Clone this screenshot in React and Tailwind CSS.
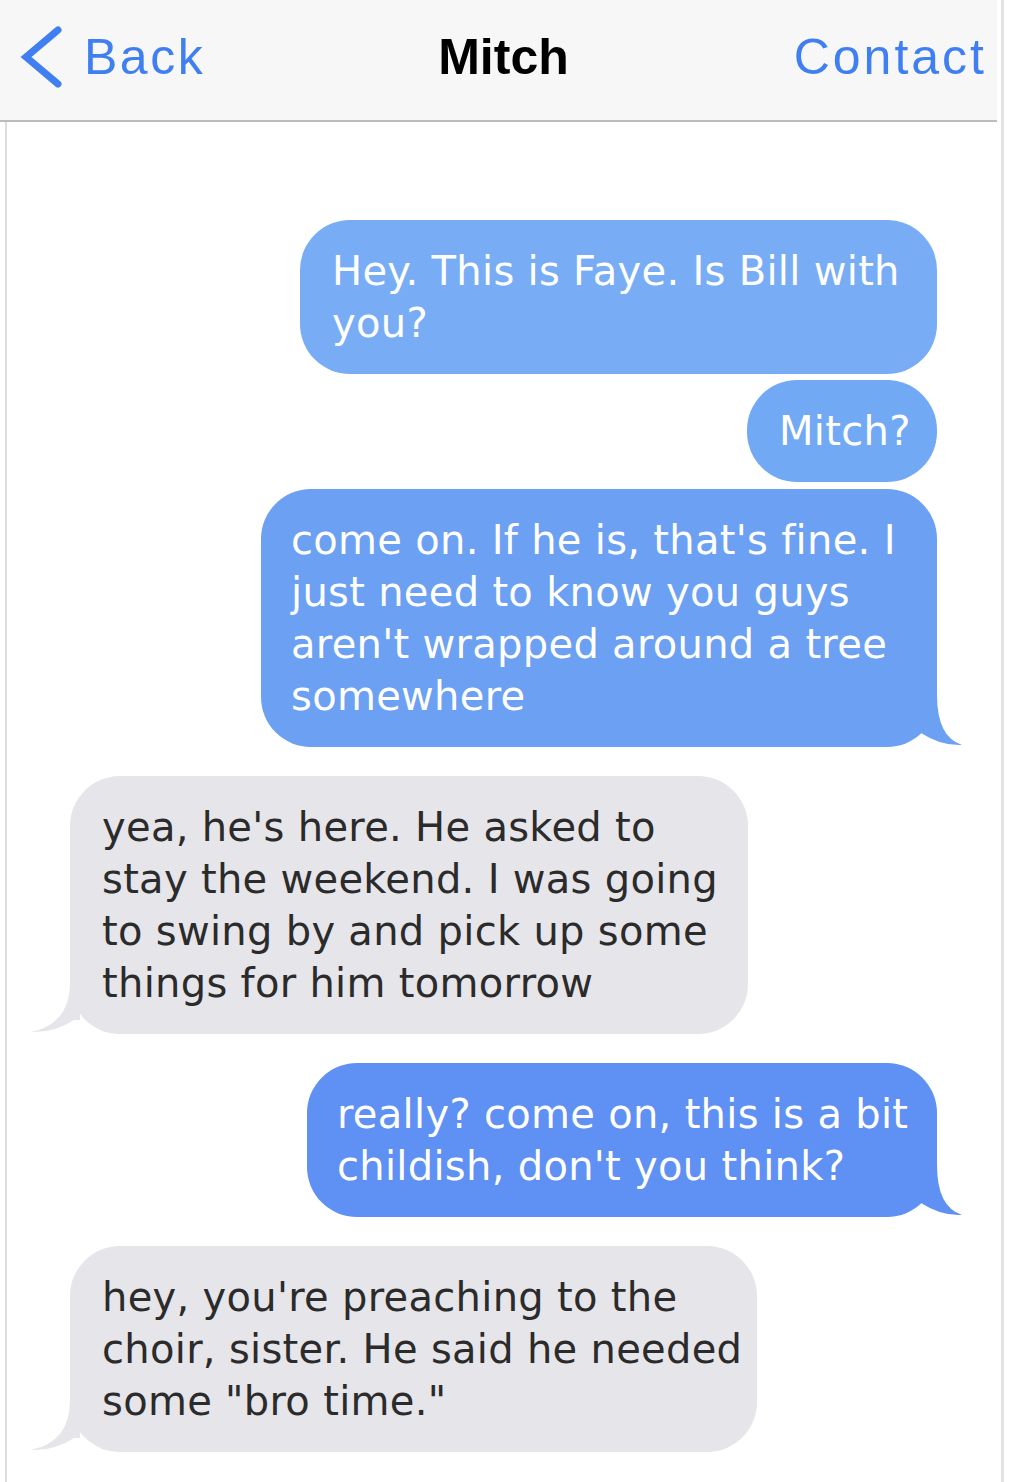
export default function App() {
  const font = { fontFamily: '"DejaVu Sans", Verdana, sans-serif' }

  const SentTail = ({ color }) => (
    <svg width="50" height="52" viewBox="0 0 50 52" className="absolute right-[-26px] bottom-0">
      <path d="M0 0 L24 0 Q24 42 49 50 Q28 51 8 38 L0 38 Z" fill={color} />
    </svg>
  )

  const ReceivedTail = () => (
    <svg width="50" height="52" viewBox="0 0 50 52" className="absolute left-[-40px] bottom-0">
      <path d="M50 0 L40 0 Q40 42 1 50 Q24 51 44 38 L50 38 Z" fill="#e5e5ea" />
    </svg>
  )

  return (
    <div className="w-[1016px] min-h-[1482px] bg-white">
      <div className="w-[1004px] min-h-[1482px] border-r-[3px] border-[#e3e3e3]">
        {/* nav bar */}
        <div className="h-[122px] bg-[#f7f7f7] border-b-2 border-[#bcbcbc] mr-[4px] flex items-center justify-between pl-[20px] pr-[10px] pb-[6px] font-['Liberation_Sans',Arial,sans-serif]">
          <div className="flex items-center gap-[20px] w-[260px]">
            <svg width="44" height="64" viewBox="0 0 44 64" className="text-[#3f7ff2]">
              <polyline points="38,5 6,32 38,59" fill="none" stroke="currentColor" strokeWidth="7" strokeLinecap="round" strokeLinejoin="miter" />
            </svg>
            <span className="text-[50px] tracking-[2.5px] text-[#3f7ff2] leading-none">Back</span>
          </div>
          <span className="text-[50px] font-bold text-black leading-none">Mitch</span>
          <div className="w-[260px] flex justify-end">
            <span className="text-[50px] tracking-[3px] text-[#3f7ff2] leading-none">Contact</span>
          </div>
        </div>

        {/* messages */}
        <div className="ml-[5px] border-l-2 border-[#dcdcdc] min-h-[1360px] pt-[98px] flex flex-col text-[40px] leading-[52px] tracking-[0.3px] whitespace-nowrap" style={font}>
          <div className="flex justify-end mr-[64px]">
            <div className="w-[637px] rounded-[50px] bg-[#78adf5] text-white px-[32px] py-[25px]">
              <span className="block">Hey. This is Faye. Is Bill with</span>
              <span className="block">you?</span>
            </div>
          </div>

          <div className="flex justify-end mr-[64px] mt-[6px]">
            <div className="w-[190px] rounded-[50px] bg-[#72a9f5] text-white px-[32px] py-[25px] text-right">
              <span className="block">Mitch?</span>
            </div>
          </div>

          <div className="flex justify-end mr-[64px] mt-[7px]">
            <div className="relative w-[676px] rounded-[50px] bg-[#6ba0f3] text-white px-[30px] py-[25px]">
              <span className="block">come on. If he is, that's fine. I</span>
              <span className="block">just need to know you guys</span>
              <span className="block">aren't wrapped around a tree</span>
              <span className="block">somewhere</span>
              <SentTail color="#6ba0f3" />
            </div>
          </div>

          <div className="flex justify-start ml-[63px] mt-[29px]">
            <div className="relative w-[678px] rounded-[50px] bg-[#e5e5ea] text-[#2b2b2b] px-[32px] py-[25px]">
              <span className="block">yea, he's here. He asked to</span>
              <span className="block">stay the weekend. I was going</span>
              <span className="block">to swing by and pick up some</span>
              <span className="block">things for him tomorrow</span>
              <ReceivedTail />
            </div>
          </div>

          <div className="flex justify-end mr-[64px] mt-[29px]">
            <div className="relative w-[630px] rounded-[50px] bg-[#5f90f4] text-white px-[30px] py-[25px]">
              <span className="block">really? come on, this is a bit</span>
              <span className="block">childish, don't you think?</span>
              <SentTail color="#5f90f4" />
            </div>
          </div>

          <div className="flex justify-start ml-[63px] mt-[29px]">
            <div className="relative w-[687px] rounded-[50px] bg-[#e5e5ea] text-[#2b2b2b] px-[32px] py-[25px]">
              <span className="block">hey, you're preaching to the</span>
              <span className="block">choir, sister. He said he needed</span>
              <span className="block">some "bro time."</span>
              <ReceivedTail />
            </div>
          </div>
        </div>
      </div>
    </div>
  )
}
